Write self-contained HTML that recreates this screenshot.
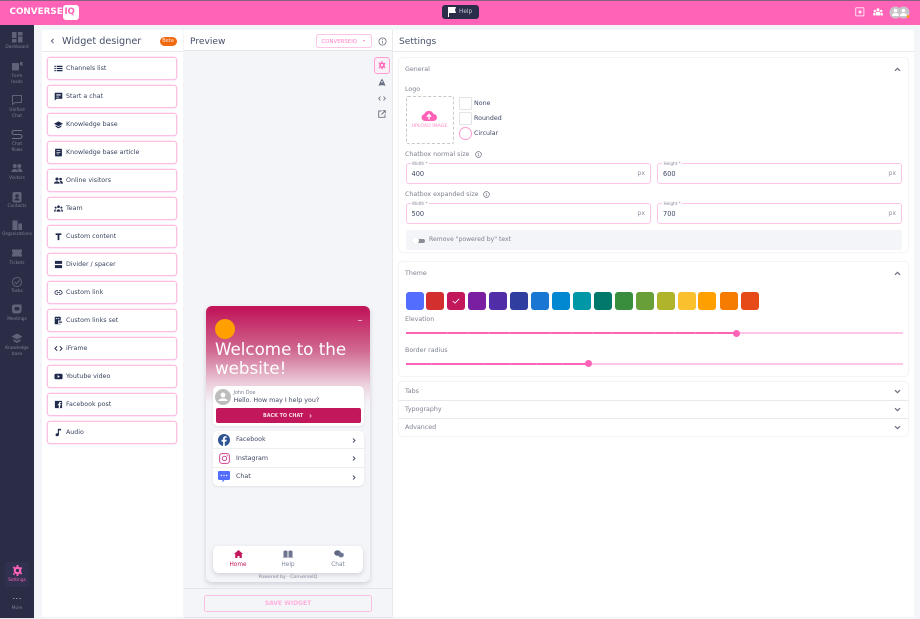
<!DOCTYPE html>
<html style="background:#f4f5f8"><head><meta charset="utf-8"><title>Widget designer</title>
<style>
*{box-sizing:border-box}
html,body{margin:0;padding:0;width:920px;height:619px;overflow:hidden;font-family:"DejaVu Sans","Liberation Sans",sans-serif;color:#3c4560}
body{background:#f4f5f8;filter:blur(.3px)}
.a{position:absolute}
.t{position:absolute;white-space:nowrap;line-height:1}
.sl{position:absolute;left:0;width:34px;margin-top:.5px;text-align:center;font-size:4.3px;line-height:5.6px;color:#7d8196}
.si{position:absolute;left:11px;width:12px;height:12px;fill:#5f637a}
.it{position:absolute;left:47px;width:130px;height:23px;background:#fff;border:1px solid #fdc0e3;border-radius:3px;box-shadow:0 0 0 .5px #fdd5ec}
.it span{position:absolute;left:18px;top:6.500px;font-size:6.300px;line-height:8px;color:#3a4460;white-space:nowrap}
.it svg{position:absolute;left:6px;top:6px;width:9px;height:9px;fill:#1f2a4d}
.inp{position:absolute;height:21px;background:#fff;border:1.200px solid #fdc6e6;border-radius:3px}
.inp b{position:absolute;left:5px;top:6px;font-weight:400;font-size:6.600px;line-height:8px;color:#3f4863}
.inp i{position:absolute;right:5px;top:6px;font-style:normal;font-size:6.200px;line-height:8px;color:#8d90a0}
.inp em{position:absolute;left:4px;top:-3px;background:#fff;padding:0 1.500px;font-style:normal;font-size:4.200px;line-height:5px;color:#85889a}
.sw{position:absolute;top:292px;width:18px;height:18px;border-radius:3px}
.lab{position:absolute;margin-top:1px;white-space:nowrap;font-size:6.300px;line-height:8px;color:#7e8292}
.card{position:absolute;left:399px;width:509px;background:#fff;border-radius:3px;box-shadow:0 0 1.500px rgba(40,40,70,.22)}
.chev{position:absolute;left:894px;width:7px;height:5px;fill:none;stroke:#6a6e80;stroke-width:1.200}
</style></head><body>

<!-- top bar -->
<div class="a" style="left:0;top:0;width:920px;height:24.500px;background:#ff63b8;border-top:1px solid #8a5f80"></div>
<div class="t" style="left:9.500px;top:6.500px;font-size:8.800px;line-height:11px;font-weight:700;color:#fff">CONVERSE</div>
<div class="a" style="left:63px;top:4.500px;width:16px;height:15.500px;background:#fff;border-radius:3px"></div>
<div class="t" style="left:64.500px;top:7px;font-size:8.600px;line-height:11px;font-weight:700;color:#ff63b8;letter-spacing:-.2px">IQ</div>
<div class="a" style="left:442px;top:4.500px;width:37px;height:14px;background:#2b2e48;border-radius:3px"></div>
<svg class="a" style="left:447px;top:7px;width:10px;height:10px" viewBox="0 0 10 10"><path d="M1 0h8L8 3l1 3H2v4H1z" fill="#fff"/></svg>
<div class="t" style="left:459px;top:9px;font-size:5.800px;line-height:7px;color:#c6c8d4">Help</div>
<svg class="a" style="left:855px;top:7px;width:10px;height:10px" viewBox="0 0 10 10"><rect x=".7" y=".7" width="8.200" height="8.200" rx="1" fill="none" stroke="#ffe0f2" stroke-width="1"/><path d="M5 3v4M3 5h4" stroke="#fff" stroke-width="1"/></svg>
<svg class="a" style="left:873px;top:8px;width:10px;height:8px" viewBox="0 0 10 8" fill="#fff"><circle cx="5" cy="1.700" r="1.500"/><circle cx="1.800" cy="3" r="1.200"/><circle cx="8.200" cy="3" r="1.200"/><rect x="3" y="3.800" width="4" height="3.700" rx=".6"/><rect x=".2" y="4.800" width="2.400" height="2.700"/><rect x="7.400" y="4.800" width="2.400" height="2.700"/></svg>
<svg class="a" style="left:888px;top:5px;width:24px;height:15px" viewBox="0 0 24 15"><circle cx="7.500" cy="7.500" r="6" fill="#c9c4c9"/><circle cx="15.500" cy="7.500" r="6" fill="#c9c4c9"/><circle cx="7.500" cy="5.500" r="1.800" fill="#fff"/><path d="M4 11c0-4 7-4 7 0z" fill="#fff"/><circle cx="15.500" cy="5.500" r="1.800" fill="#fff"/><path d="M12 11c0-4 7-4 7 0z" fill="#fff"/><circle cx="20" cy="11.500" r="1.400" fill="#ffa000"/></svg>

<!-- sidebar -->
<div class="a" style="left:0;top:24.500px;width:34px;height:594.500px;background:#2a2d45"></div>
<svg class="si" style="top:31px" viewBox="0 0 12 12"><rect x="1" y="1" width="4.500" height="6"/><rect x="7" y="1" width="4.500" height="3.500"/><rect x="1" y="8" width="4.500" height="3.500"/><rect x="7" y="5.500" width="4.500" height="6"/></svg>
<div class="sl" style="top:44.500px">Dashboard</div>
<svg class="si" style="top:60px" viewBox="0 0 12 12"><rect x="1" y="3" width="7" height="7.500" rx=".8"/><path d="M9 2h2.500v4L10 5 9 6z"/></svg>
<div class="sl" style="top:73.500px">Form<br>leads</div>
<svg class="si" style="top:94px;fill:none;stroke:#5f637a" viewBox="0 0 12 12"><path d="M1.500 1.500h9v7H4l-2.500 2z" stroke-width="1"/></svg>
<div class="sl" style="top:107.500px">Unified<br>Chat</div>
<svg class="si" style="top:127.500px;fill:none;stroke:#6d7187" viewBox="0 0 12 12"><path d="M11 2.500H3a2 2 0 0 0 0 4h6a2 2 0 0 1 0 4H1" stroke-width="1.100"/></svg>
<div class="sl" style="top:141.500px">Chat<br>flows</div>
<svg class="si" style="top:162px" viewBox="0 0 12 12"><circle cx="3.800" cy="4" r="2"/><circle cx="8.300" cy="4" r="2"/><path d="M.5 10c0-4 6.500-4 6.500 0zM7.500 10c0-2-.5-2.700-1-3.200 2.400-.8 5 .4 5 3.200z"/></svg>
<div class="sl" style="top:175.500px">Visitors</div>
<svg class="si" style="top:190.500px" viewBox="0 0 12 12"><rect x="1.500" y="1" width="9" height="10.500" rx="1.500"/><circle cx="6" cy="5" r="1.700" fill="#2a2d45"/><path d="M3.300 9.500c0-3 5.400-3 5.400 0z" fill="#2a2d45"/></svg>
<div class="sl" style="top:203.500px">Contacts</div>
<svg class="si" style="top:219px" viewBox="0 0 12 12"><path d="M1.500 1.500h5v9.500h-5zM7.300 4.500h3.700v6.500H7.300z"/></svg>
<div class="sl" style="top:231.500px">Organizations</div>
<svg class="si" style="top:247px" viewBox="0 0 12 12"><path d="M1 2.500h10v2.500a1 1 0 0 0 0 2v2.500H1V7a1 1 0 0 0 0-2z"/></svg>
<div class="sl" style="top:260.500px">Tickets</div>
<svg class="si" style="top:275.500px;fill:none;stroke:#5f637a" viewBox="0 0 12 12"><circle cx="6" cy="6" r="4.500"/><path d="M3.800 6l1.700 1.700 3-3.500"/></svg>
<div class="sl" style="top:288.500px">Tasks</div>
<svg class="si" style="top:303px" viewBox="0 0 12 12"><path d="M1 3.500C1 2 2 1.500 3.500 1.500h7V7c0 2.500-1.500 3.500-3.500 3.500H4c-2 0-3-1-3-3z"/><rect x="3.500" y="4" width="5" height="3.500" rx="1.500" fill="#2a2d45"/></svg>
<div class="sl" style="top:316.500px">Meetings</div>
<svg class="si" style="top:332px" viewBox="0 0 12 12"><path d="M6 1.500l5.500 3L6 7.500l-5.500-3z"/><path d="M2.500 7l3.500 2 3.500-2v2L6 11 2.500 9z"/></svg>
<div class="sl" style="top:345.500px">Knowledge<br>base</div>
<div class="a" style="left:5px;top:562px;width:24px;height:25px;background:#30304f;border-radius:2px"></div>
<svg class="a" style="left:11.500px;top:565px;width:11px;height:11px" viewBox="0 0 12 12"><circle cx="6" cy="6" r="3" fill="none" stroke="#ff63b8" stroke-width="2.400"/><path d="M5 0h2v2H5zM5 10h2v2H5zM.8 2.500l1.500-1 1 1.700-1.500 1zM8.700 8.800l1.500-1 1 1.700-1.500 1zM.8 9.500l1 1.500 1.500-1-1-1.600zM8.700 3.200l1 1.500 1.500-1-1-1.700z" fill="#ff63b8"/></svg>
<div class="sl" style="top:577.500px;color:#ff63b8">Settings</div>
<div class="t" style="left:13px;top:597.500px;width:8px;height:1.400px;background:repeating-linear-gradient(90deg,#8a8da0 0 1.500px,transparent 1.500px 3.200px)"></div>
<div class="sl" style="top:605.500px">More</div>
<div class="a" style="left:0;top:617.500px;width:34px;height:1.500px;background:#e8e8ee"></div>

<!-- left panel -->
<div class="a" style="left:42px;top:30px;width:141px;height:587px;background:#fff"></div>
<div class="a" style="left:42px;top:51px;width:141px;height:1px;background:#e9eaef"></div>
<svg class="a" style="left:49.500px;top:38px;width:5px;height:6px" viewBox="0 0 5 6"><path d="M3.600.8L1.400 3l2.200 2.200" fill="none" stroke="#5a6075" stroke-width="1"/></svg>
<div class="t" style="left:62px;top:35.500px;font-size:9.700px;line-height:12px;color:#465069">Widget designer</div>
<div class="a" style="left:159.500px;top:36.500px;width:17px;height:9px;background:#f0690f;border-radius:4.500px"></div>
<div class="t" style="left:159.500px;top:38px;width:17px;text-align:center;font-size:5px;line-height:6px;color:#ffe7d6">Beta</div>

<div class="it" style="top:57px"><svg viewBox="0 0 10 10"><path d="M.5 2h1.500v1.300H.5zM.5 4.300h1.500v1.400H.5zM.5 6.700h1.500V8H.5zM3 2h6.500v1.300H3zM3 4.300h6.500v1.400H3zM3 6.700h6.500V8H3z"/></svg><span>Channels list</span></div>
<div class="it" style="top:85px"><svg viewBox="0 0 10 10"><path d="M.8.800h8.400v6.700H3L.8 9.500z"/><path d="M2.500 2.700h5M2.500 4.200h5M2.500 5.700h3" stroke="#fff" stroke-width=".7"/></svg><span>Start a chat</span></div>
<div class="it" style="top:113px"><svg viewBox="0 0 10 10"><path d="M5 1.500l5 2.700-5 2.700-5-2.700z"/><path d="M1.800 6l3.200 1.800L8.200 6v1.500L5 9.300 1.800 7.500z"/></svg><span>Knowledge base</span></div>
<div class="it" style="top:141px"><svg viewBox="0 0 10 10"><rect x="1.200" y=".8" width="7.600" height="8.500" rx=".7"/><path d="M2.800 3h4.400M2.800 4.800h4.400M2.800 6.600h3" stroke="#fff" stroke-width=".7"/></svg><span>Knowledge base article</span></div>
<div class="it" style="top:169px"><svg viewBox="0 0 10 10"><circle cx="3.300" cy="3.400" r="1.700"/><circle cx="7.300" cy="3.400" r="1.500"/><path d="M0 8.500c0-3.300 6.500-3.300 6.500 0zM7.200 8.500c0-1.700-.4-2.400-1-3 1.800-.5 3.800.5 3.800 3z"/></svg><span>Online visitors</span></div>
<div class="it" style="top:197px"><svg viewBox="0 0 10 10"><circle cx="5" cy="3" r="1.500"/><circle cx="1.800" cy="4" r="1.100"/><circle cx="8.200" cy="4" r="1.100"/><path d="M2.800 8.500c0-3.400 4.400-3.400 4.400 0zM0 8.500c0-2 1-2.700 2.300-2.500-.5.700-.5 1.500-.5 2.500zM10 8.500c0-2-1-2.700-2.300-2.500.5.700.5 1.500.5 2.500z"/></svg><span>Team</span></div>
<div class="it" style="top:225px"><svg viewBox="0 0 10 10"><path d="M1.800 1.500h6.400v1.800H6v5.700H4V3.300H1.800z"/></svg><span>Custom content</span></div>
<div class="it" style="top:253px"><svg viewBox="0 0 10 10"><rect x="1" y="1" width="8" height="3.300"/><rect x="1" y="5.700" width="8" height="3.300"/></svg><span>Divider / spacer</span></div>
<div class="it" style="top:281px"><svg viewBox="0 0 10 10"><path d="M3 3h1.500M3 7h1.500M5.500 3H7a2 2 0 0 1 0 4H5.500M4.500 7H3a2 2 0 0 1 0-4h1.500M3.300 5h3.400" fill="none" stroke="#1f2a4d" stroke-width=".9"/></svg><span>Custom link</span></div>
<div class="it" style="top:309px"><svg viewBox="0 0 10 10"><rect x=".8" y=".8" width="6.700" height="8.400" rx=".6"/><rect x="4.500" y="5" width="5.200" height="3.700" fill="#fff"/><path d="M5.200 6.800h3.800" stroke="#1f2a4d" stroke-width="1.300"/><path d="M2 3h1.500M4.200 3h1.800" stroke="#fff"/></svg><span>Custom links set</span></div>
<div class="it" style="top:337px"><svg viewBox="0 0 10 10"><path d="M3.500 2.500L1 5l2.500 2.500M6.500 2.500L9 5 6.500 7.500" fill="none" stroke="#1f2a4d" stroke-width="1"/></svg><span>iFrame</span></div>
<div class="it" style="top:365px"><svg viewBox="0 0 10 10"><rect x=".5" y="2" width="9" height="6" rx="1.500"/><path d="M4 3.500L6.500 5 4 6.500z" fill="#fff"/></svg><span>Youtube video</span></div>
<div class="it" style="top:393px"><svg viewBox="0 0 10 10"><rect x="1" y="1" width="8" height="8" rx=".6"/><path d="M6.800 9V6h1.100l.2-1.300H6.800v-.8c0-.4.200-.6.600-.6h.7V2.200H7c-1.200 0-1.700.7-1.700 1.700v.8H4.200V6h1.100v3z" fill="#fff"/></svg><span>Facebook post</span></div>
<div class="it" style="top:421px"><svg viewBox="0 0 10 10"><path d="M4.300 1h3.500v1.700H5.500v4.500c0 1.200-.9 2-2 2s-1.800-.7-1.800-1.600c0-1 .9-1.700 2-1.700.2 0 .4 0 .6.100z"/></svg><span>Audio</span></div>

<!-- preview column -->
<div class="a" style="left:184px;top:30px;width:208px;height:21px;background:#fff;border-bottom:1px solid #e6e7ec"></div>
<div class="a" style="left:392px;top:30px;width:1px;height:587px;background:#e9eaef"></div>
<div class="t" style="left:190px;top:35.500px;font-size:9.100px;line-height:12px;color:#465069">Preview</div>
<div class="a" style="left:315.500px;top:34px;width:56.500px;height:14px;background:#fff;border:1px solid #fdc6e6;border-radius:2.500px"></div>
<div class="t" style="left:321.500px;top:38.500px;font-size:5.400px;line-height:6px;color:#ff80c6">CONVERSEIQ</div>
<div class="a" style="left:362.500px;top:40px;width:0;height:0;border-left:1.700px solid transparent;border-right:1.700px solid transparent;border-top:2px solid #ff7cc4"></div>
<svg class="a" style="left:377.500px;top:36.500px;width:9px;height:9px" viewBox="0 0 9 9"><circle cx="4.500" cy="4.500" r="3.600" fill="none" stroke="#6b7083" stroke-width=".8"/><path d="M4.500 4v2.500M4.500 2.400v.9" stroke="#6b7083" stroke-width=".8"/></svg>
<div class="a" style="left:374px;top:57px;width:16px;height:16.500px;border:1px solid #ff9ed4;border-radius:3px;background:#f8f0f6"></div>
<svg class="a" style="left:378px;top:61px;width:8px;height:8.500px" viewBox="0 0 12 12"><circle cx="6" cy="6" r="3" fill="none" stroke="#ff63b8" stroke-width="2.400"/><path d="M5 0h2v2H5zM5 10h2v2H5zM.8 2.500l1.500-1 1 1.700-1.500 1zM8.700 8.800l1.500-1 1 1.700-1.500 1zM.8 9.500l1 1.500 1.500-1-1-1.600zM8.700 3.200l1 1.500 1.500-1-1-1.700z" fill="#ff63b8"/></svg>
<svg class="a" style="left:378px;top:77.500px;width:8px;height:9px" viewBox="0 0 8 9"><path d="M4 .5L6 4l1.500 4-2-.8h-3L.5 8 2 4z" fill="#6b7083"/><circle cx="4" cy="3.800" r=".8" fill="#f4f5f8"/></svg>
<svg class="a" style="left:378px;top:95.500px;width:8px;height:5px" viewBox="0 0 8 5"><path d="M2.500.5L.7 2.500l1.800 2M5.500.5l1.800 2-1.800 2" fill="none" stroke="#6b7083" stroke-width=".9"/></svg>
<svg class="a" style="left:378px;top:110px;width:8px;height:8px" viewBox="0 0 8 8"><path d="M3.500 1H.7v6.300H7V4.500M4.500.7h2.800v2.800M7.300.7L3.500 4.500" fill="none" stroke="#6b7083" stroke-width=".9"/></svg>

<!-- widget -->
<div class="a" style="left:206px;top:305.500px;width:164px;height:276.500px;border-radius:6px;background:linear-gradient(180deg,#c2185b 0,#c2185b 4px,#d06a92 45px,#eccfdc 78px,#f4f5f8 97px);box-shadow:0 2px 5px rgba(60,60,90,.2)"></div>
<div class="a" style="left:214.500px;top:318.500px;width:20px;height:20px;border-radius:50%;background:#ffa000"></div>
<div class="a" style="left:357.500px;top:319.500px;width:4px;height:1px;background:#eab0c8"></div>
<div class="t" style="left:215px;top:340px;font-size:16.700px;line-height:19.300px;color:#fff;white-space:normal;width:150px">Welcome to the website!</div>
<div class="a" style="left:213px;top:386px;width:151px;height:39.500px;background:#fff;border-radius:5px;box-shadow:0 1px 2px rgba(60,60,90,.1)"></div>
<svg class="a" style="left:215px;top:389px;width:16px;height:16px" viewBox="0 0 16 16"><circle cx="8" cy="8" r="8" fill="#bdbdbd"/><circle cx="8" cy="6" r="2.400" fill="#fff"/><path d="M3.500 12c0-3.500 9-3.500 9 0z" fill="#fff"/></svg>
<div class="t" style="left:233.500px;top:390px;font-size:4.900px;line-height:6px;color:#7c7f8d">John Doe</div>
<div class="t" style="left:233.500px;top:397px;font-size:6.300px;line-height:8px;color:#3f4863">Hello. How may I help you?</div>
<div class="a" style="left:215.500px;top:408px;width:145.500px;height:15px;background:#c2185b;border-radius:2px"></div>
<div class="t" style="left:263px;top:412.500px;font-size:4.900px;line-height:6px;font-weight:700;color:#f8dde8">BACK TO CHAT</div>
<svg class="a" style="left:309px;top:413.500px;width:3px;height:4px" viewBox="0 0 3 4"><path d="M.7.400L2.300 2 .7 3.600" fill="none" stroke="#f8dde8" stroke-width=".7"/></svg>
<div class="a" style="left:213px;top:431px;width:151px;height:55px;background:#fff;border-radius:5px;box-shadow:0 1px 2px rgba(60,60,90,.1)"></div>
<div class="a" style="left:213px;top:448px;width:151px;height:1px;background:#eeeff3"></div>
<div class="a" style="left:213px;top:467px;width:151px;height:1px;background:#eeeff3"></div>
<svg class="a" style="left:218px;top:433.500px;width:12px;height:12px" viewBox="0 0 12 12"><circle cx="6" cy="6" r="6" fill="#2f5595"/><path d="M6.800 12V7.600h1.500l.3-1.800H6.800V4.700c0-.5.300-.9.900-.9h.9V2.300c-1.900-.3-3.500 0-3.500 2.200v1.300H3.600v1.800h1.500V12z" fill="#fff"/></svg>
<svg class="a" style="left:218.500px;top:452.500px;width:11px;height:11px" viewBox="0 0 11 11"><rect x=".6" y=".6" width="9.800" height="9.800" rx="2.500" fill="none" stroke="#d4579a" stroke-width="1.100"/><circle cx="5.500" cy="5.500" r="2.200" fill="none" stroke="#c9478f" stroke-width="1"/><circle cx="8.200" cy="2.800" r=".6" fill="#c9478f"/></svg>
<svg class="a" style="left:218px;top:470.500px;width:12px;height:12px" viewBox="0 0 12 12"><path d="M1.200 0h9.600A1.200 1.200 0 0 1 12 1.200v6.600A1.200 1.200 0 0 1 10.800 9H6.500L4.500 11.500V9H1.200A1.200 1.200 0 0 1 0 7.800V1.200A1.200 1.200 0 0 1 1.200 0z" fill="#536dfe"/><circle cx="3.300" cy="4.500" r=".7" fill="#fff"/><circle cx="6" cy="4.500" r=".7" fill="#fff"/><circle cx="8.700" cy="4.500" r=".7" fill="#fff"/></svg>
<div class="t" style="left:236px;top:436px;font-size:6.300px;line-height:8px;color:#3f4863">Facebook</div>
<div class="t" style="left:236px;top:454.500px;font-size:6.300px;line-height:8px;color:#3f4863">Instagram</div>
<div class="t" style="left:236px;top:473px;font-size:6.300px;line-height:8px;color:#3f4863">Chat</div>
<svg class="a" style="left:351.500px;top:437.500px;width:4px;height:5px" viewBox="0 0 4 5"><path d="M1 .5l2 2-2 2" fill="none" stroke="#3f4863" stroke-width=".9"/></svg>
<svg class="a" style="left:351.500px;top:456px;width:4px;height:5px" viewBox="0 0 4 5"><path d="M1 .5l2 2-2 2" fill="none" stroke="#3f4863" stroke-width=".9"/></svg>
<svg class="a" style="left:351.500px;top:474.500px;width:4px;height:5px" viewBox="0 0 4 5"><path d="M1 .5l2 2-2 2" fill="none" stroke="#3f4863" stroke-width=".9"/></svg>
<div class="a" style="left:213px;top:545.500px;width:150px;height:27px;background:#fff;border-radius:6px;box-shadow:0 2px 5px rgba(60,60,90,.18)"></div>
<svg class="a" style="left:233.500px;top:549.500px;width:9px;height:8.500px" viewBox="0 0 9 8.500"><path d="M4.500 0L9 4H7.800v4.500H5.500V6h-2v2.500H1.200V4H0z" fill="#c2185b"/></svg>
<svg class="a" style="left:283px;top:550px;width:10px;height:8px" viewBox="0 0 10 8"><path d="M.5 1c1.500-.7 3-.7 4 .2V8c-1-.7-2.500-.7-4 0zM9.500 1c-1.500-.7-3-.7-4 .2V8c1-.7 2.500-.7 4 0z" fill="#6d7591"/></svg>
<svg class="a" style="left:333.500px;top:550px;width:10px;height:8px" viewBox="0 0 10 8"><ellipse cx="3.500" cy="3" rx="3.300" ry="2.800" fill="#5f6785"/><ellipse cx="7" cy="5" rx="2.800" ry="2.400" fill="#6d7591"/></svg>
<div class="t" style="left:213px;top:561.500px;width:50px;text-align:center;font-size:5.800px;line-height:7px;color:#c2185b">Home</div>
<div class="t" style="left:263px;top:561.500px;width:50px;text-align:center;font-size:5.800px;line-height:7px;color:#7e849c">Help</div>
<div class="t" style="left:313px;top:561.500px;width:50px;text-align:center;font-size:5.800px;line-height:7px;color:#7e849c">Chat</div>
<div class="t" style="left:206px;top:575px;width:164px;text-align:center;font-size:4.700px;line-height:6px;color:#83869a">Powered by · ConverseIQ</div>
<div class="a" style="left:184px;top:588px;width:208px;height:1px;background:#e4e5ea"></div>
<div class="a" style="left:204px;top:595px;width:168px;height:16.500px;border:1px solid #fdbfe2;border-radius:2.500px"></div>
<div class="t" style="left:204px;top:600px;width:168px;text-align:center;font-size:6px;line-height:7px;font-weight:700;color:#ffb0dc">SAVE WIDGET</div>
<div class="a" style="left:184px;top:616.500px;width:208px;height:1px;background:#e4e5ea"></div>

<!-- settings -->
<div class="a" style="left:393px;top:30px;width:521px;height:587px;background:#fff;border-radius:0 3px 0 0"></div>
<div class="a" style="left:393px;top:51px;width:521px;height:1px;background:#e8e9ee"></div>
<div class="t" style="left:399px;top:35.500px;font-size:9.100px;line-height:12px;color:#465069">Settings</div>

<div class="card" style="top:58px;height:193.500px"></div>
<div class="lab" style="left:405px;top:65px">General</div>
<svg class="chev" style="top:67px" viewBox="0 0 7 5"><path d="M1 3.800l2.500-2.500L6 3.800"/></svg>
<div class="lab" style="left:405px;top:84.500px">Logo</div>
<div class="a" style="left:405.500px;top:96px;width:48px;height:48px;border:1px dashed #c7c8cf;border-radius:2px"></div>
<svg class="a" style="left:421px;top:110px;width:16px;height:11px" viewBox="0 0 16 11"><path d="M4 11a3.500 3.500 0 0 1-.8-6.900A5 5 0 0 1 12.500 4a3.500 3.500 0 0 1 0 7z" fill="#ff63b8"/><path d="M8 9.500V5M6 6.800l2-2.300 2 2.300" fill="none" stroke="#fff" stroke-width="1.300"/></svg>
<div class="t" style="left:405.500px;top:124px;width:48px;text-align:center;font-size:4.700px;line-height:6px;color:#ff8cca">UPLOAD IMAGE</div>
<div class="a" style="left:459px;top:97px;width:12.500px;height:12.500px;border:1px solid #e3e3e8;border-radius:1.500px"></div>
<div class="a" style="left:459px;top:112px;width:12.500px;height:12.500px;border:1px solid #e3e3e8;border-radius:1.500px"></div>
<div class="a" style="left:459px;top:127px;width:12.500px;height:12.500px;border:1px solid #ff9ed4;border-radius:50%"></div>
<div class="lab" style="left:474px;top:99px;color:#3f4863">None</div>
<div class="lab" style="left:474px;top:114px;color:#3f4863">Rounded</div>
<div class="lab" style="left:474px;top:129px;color:#3f4863">Circular</div>
<div class="lab" style="left:405px;top:150px">Chatbox normal size</div>
<svg class="a" style="left:474.500px;top:151px;width:7px;height:7px" viewBox="0 0 9 9"><circle cx="4.500" cy="4.500" r="3.700" fill="none" stroke="#6b7083" stroke-width=".9"/><path d="M4.500 4v2.500M4.500 2.400v.9" stroke="#6b7083" stroke-width=".9"/></svg>
<div class="inp" style="left:405.500px;top:163px;width:245.500px"><em>Width *</em><b>400</b><i>px</i></div>
<div class="inp" style="left:657px;top:163px;width:245px"><em>Height *</em><b>600</b><i>px</i></div>
<div class="lab" style="left:405px;top:189.500px">Chatbox expanded size</div>
<svg class="a" style="left:483px;top:190.500px;width:7px;height:7px" viewBox="0 0 9 9"><circle cx="4.500" cy="4.500" r="3.700" fill="none" stroke="#6b7083" stroke-width=".9"/><path d="M4.500 4v2.500M4.500 2.400v.9" stroke="#6b7083" stroke-width=".9"/></svg>
<div class="inp" style="left:405.500px;top:203px;width:245.500px"><em>Width *</em><b>500</b><i>px</i></div>
<div class="inp" style="left:657px;top:203px;width:245px"><em>Height *</em><b>700</b><i>px</i></div>
<div class="a" style="left:405.500px;top:230px;width:496.500px;height:19.500px;background:#f4f5f8;border-radius:3px"></div>
<div class="a" style="left:415px;top:238.500px;width:10px;height:4px;background:#8c8e96;border-radius:2px"></div>
<div class="a" style="left:411.500px;top:236.500px;width:7px;height:7px;background:#fff;border-radius:50%;box-shadow:0 0 1px rgba(0,0,0,.2)"></div>
<div class="lab" style="left:429px;top:235px;font-size:6.100px">Remove "powered by" text</div>

<div class="card" style="top:262px;height:114px"></div>
<div class="lab" style="left:405px;top:269px">Theme</div>
<svg class="chev" style="top:271px" viewBox="0 0 7 5"><path d="M1 3.800l2.500-2.500L6 3.800"/></svg>
<div class="sw" style="left:405.500px;background:#536dfe"></div>
<div class="sw" style="left:426.300px;background:#d32f2f"></div>
<div class="sw" style="left:447px;background:#c2185b"></div>
<svg class="a" style="left:452px;top:298px;width:8px;height:6px" viewBox="0 0 8 6"><path d="M.8 3l2.200 2.200L7.200.8" fill="none" stroke="#fff" stroke-width=".8"/></svg>
<div class="sw" style="left:468px;background:#7b1fa2"></div>
<div class="sw" style="left:489px;background:#512da8"></div>
<div class="sw" style="left:510px;background:#303f9f"></div>
<div class="sw" style="left:531px;background:#1976d2"></div>
<div class="sw" style="left:552px;background:#0288d1"></div>
<div class="sw" style="left:572.700px;background:#0097a7"></div>
<div class="sw" style="left:594px;background:#00796b"></div>
<div class="sw" style="left:615px;background:#388e3c"></div>
<div class="sw" style="left:635.700px;background:#689f38"></div>
<div class="sw" style="left:656.700px;background:#afb42b"></div>
<div class="sw" style="left:677.500px;background:#fbc02d"></div>
<div class="sw" style="left:698.300px;background:#ffa000"></div>
<div class="sw" style="left:719.500px;background:#f57c00"></div>
<div class="sw" style="left:740.500px;background:#e64a19"></div>
<div class="lab" style="left:405px;top:315px">Elevation</div>
<div class="a" style="left:405.500px;top:332px;width:497px;height:2px;background:#fdc6e6"></div>
<div class="a" style="left:405.500px;top:332px;width:331px;height:2px;background:repeating-linear-gradient(90deg,#ff63b8 0 20.300px,#ff9dd4 20.300px 20.700px)"></div>
<div class="a" style="left:733px;top:329.500px;width:7px;height:7px;border-radius:50%;background:#ff63b8"></div>
<div class="lab" style="left:405px;top:346px">Border radius</div>
<div class="a" style="left:405.500px;top:362.500px;width:497px;height:2px;background:#fdc6e6"></div>
<div class="a" style="left:405.500px;top:362.500px;width:183px;height:2px;background:repeating-linear-gradient(90deg,#ff63b8 0 25.700px,#ff9dd4 25.700px 26.100px)"></div>
<div class="a" style="left:584.500px;top:359.500px;width:7.500px;height:7.500px;border-radius:50%;background:#ff63b8"></div>

<div class="card" style="top:382px;height:54px"></div>
<div class="a" style="left:399px;top:400px;width:509px;height:1px;background:#e8e9ee"></div>
<div class="a" style="left:399px;top:418px;width:509px;height:1px;background:#e8e9ee"></div>
<div class="lab" style="left:405px;top:387px">Tabs</div>
<div class="lab" style="left:405px;top:405px">Typography</div>
<div class="lab" style="left:405px;top:423px">Advanced</div>
<svg class="chev" style="top:389px" viewBox="0 0 7 5"><path d="M1 1.200l2.500 2.500L6 1.200"/></svg>
<svg class="chev" style="top:407px" viewBox="0 0 7 5"><path d="M1 1.200l2.500 2.500L6 1.200"/></svg>
<svg class="chev" style="top:425px" viewBox="0 0 7 5"><path d="M1 1.200l2.500 2.500L6 1.200"/></svg>
</body></html>
